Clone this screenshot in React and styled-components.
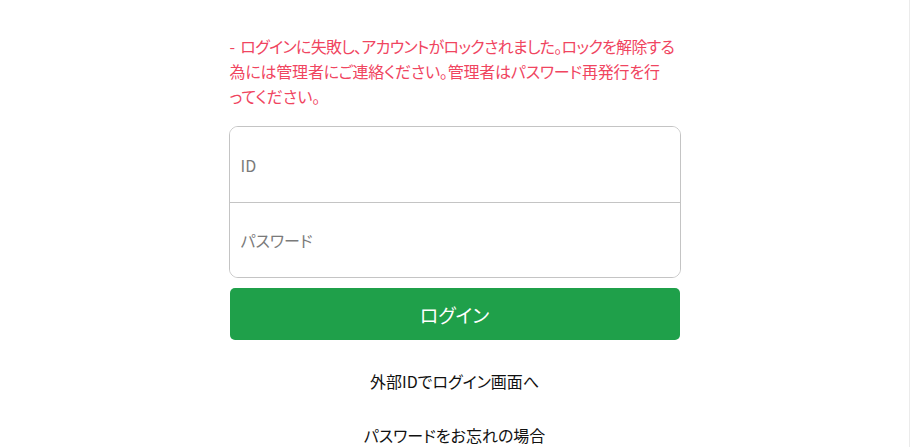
import React from "react";
import styled, { createGlobalStyle } from "styled-components";

const Global = createGlobalStyle`
  html, body { margin: 0; padding: 0; background: #fff; }
  body {
    font-family: "Noto Sans CJK JP", "Noto Sans", sans-serif;
    font-feature-settings: "palt";
  }
  * { box-sizing: border-box; }
`;

const Page = styled.div`
  min-height: 100vh;
  border-right: 1px solid #ebebeb;
  display: flex;
  justify-content: center;
  padding-top: 34px;
`;

const Form = styled.div`
  width: 450px;
  display: flex;
  flex-direction: column;
`;

const ErrorText = styled.p`
  margin: 0 0 17px;
  color: #f0455f;
  font-size: 16px;
  line-height: 25px;
`;

const ErrorLine = styled.span`
  display: block;
  white-space: nowrap;
  letter-spacing: ${(p) => p.$ls || 0}px;
`;

const Dash = styled.span`
  margin-right: 6px;
`;

const Fields = styled.div`
  border: 1px solid #c4c4c4;
  border-radius: 9px;
  margin: 0 -1px;
  overflow: hidden;
`;

const Input = styled.input`
  display: block;
  width: 100%;
  height: 75px;
  border: none;
  border-top: ${(p) => (p.$first ? "none" : "1px solid #c4c4c4")};
  padding: 0 11px;
  font-family: inherit;
  font-feature-settings: "palt";
  font-size: 16px;
  color: #333;
  outline: none;
  background: #fff;
  &::placeholder { color: #7a7a7a; }
`;

const LoginButton = styled.button`
  margin-top: 10px;
  height: 52px;
  border: none;
  border-radius: 5px;
  background: #1fa04a;
  color: #fff;
  font-family: inherit;
  font-feature-settings: "palt";
  font-size: 19px;
`;

const LinkText = styled.a`
  display: block;
  text-align: center;
  color: #111;
  font-size: 16px;
  line-height: 24px;
  text-decoration: none;
  margin-top: ${(p) => p.$mt}px;
`;

export default function App() {
  return (
    <>
      <Global />
      <Page>
        <Form>
          <ErrorText>
            <ErrorLine $ls={-0.7}>
              <Dash>-</Dash>ログインに失敗し、アカウントがロックされました。ロックを解除する
            </ErrorLine>
            <ErrorLine $ls={-0.2}>
              為には管理者にご連絡ください。管理者はパスワード再発行を行
            </ErrorLine>
            <ErrorLine>ってください。</ErrorLine>
          </ErrorText>
          <Fields>
            <Input $first placeholder="ID" />
            <Input type="password" placeholder="パスワード" />
          </Fields>
          <LoginButton>ログイン</LoginButton>
          <LinkText href="#" $mt={29}>外部IDでログイン画面へ</LinkText>
          <LinkText href="#" $mt={30}>パスワードをお忘れの場合</LinkText>
        </Form>
      </Page>
    </>
  );
}
